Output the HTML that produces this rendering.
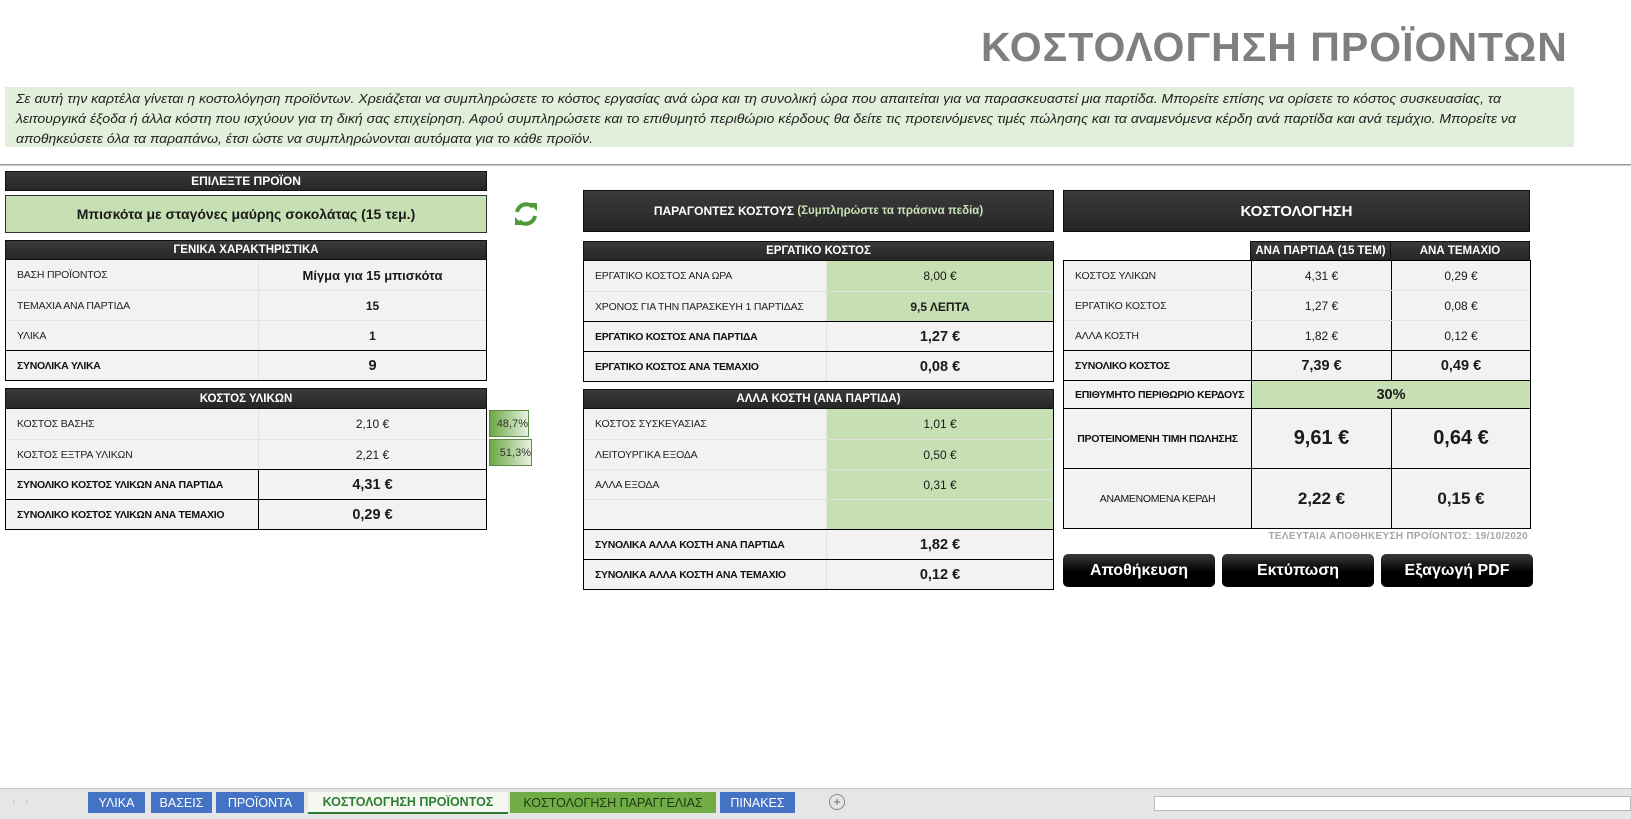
<!DOCTYPE html>
<html><head><meta charset="utf-8">
<style>
*{box-sizing:border-box;margin:0;padding:0}
body{width:1631px;height:819px;background:#fff;position:relative;overflow:hidden;font-family:"Liberation Sans","DejaVu Sans",sans-serif;color:#1a1a1a}
.a{position:absolute}
.hd{position:absolute;background:linear-gradient(#3a3a3a,#262626);color:#fff;font-weight:bold;font-size:11.5px;display:flex;align-items:center;justify-content:center;border:1px solid #111}
.tb{position:absolute;border:1px solid #000;background:#f2f2f2;border-top:none}
.r{display:flex;height:30px;border-top:1px solid #e2e2e2}
.r.b{border-top:1px solid #000}
.r>div{display:flex;align-items:center}
.l{padding-left:11px;font-size:10.5px;letter-spacing:-0.2px;color:#222}
.b .l{font-weight:bold;font-size:10.5px;letter-spacing:-0.3px;color:#111}
.v{justify-content:center;font-size:12px;border-left:1px solid #e2e2e2}
.b .v{font-weight:bold;font-size:14.5px;border-left:1px solid #000}
.g{background:#c6e0b4}
.btn{position:absolute;top:554px;height:33px;width:152px;border-radius:5px;background:linear-gradient(#3a3a3a,#000 55%);color:#fff;font-weight:bold;font-size:16px;display:flex;align-items:center;justify-content:center}
.tab{position:absolute;top:792px;height:21px;font-size:12.5px;display:flex;align-items:center;justify-content:center;color:#fff;background:#4472c4}
</style></head><body>

<div class="a" style="left:981px;top:24px;width:590px;font-size:41px;font-weight:bold;color:#7f7f7f;letter-spacing:1px;white-space:nowrap">ΚΟΣΤΟΛΟΓΗΣΗ ΠΡΟΪΟΝΤΩΝ</div>

<div class="a" style="left:5px;top:87px;width:1569px;height:60px;background:#e2efda"></div>
<svg class="a" style="left:0;top:0" width="1631" height="170">
<g font-family="Liberation Sans, sans-serif" font-style="italic" font-size="13" fill="#222">
<text x="16" y="103" textLength="1485" lengthAdjust="spacingAndGlyphs">Σε αυτή την καρτέλα γίνεται η κοστολόγηση προϊόντων. Χρειάζεται να συμπληρώσετε το κόστος εργασίας ανά ώρα και τη συνολική ώρα που απαιτείται για να παρασκευαστεί μια παρτίδα. Μπορείτε επίσης να ορίσετε το κόστος συσκευασίας, τα</text>
<text x="16" y="123" textLength="1500" lengthAdjust="spacingAndGlyphs">λειτουργικά έξοδα ή άλλα κόστη που ισχύουν για τη δική σας επιχείρηση. Αφού συμπληρώσετε και το επιθυμητό περιθώριο κέρδους θα δείτε τις προτεινόμενες τιμές πώλησης και τα αναμενόμενα κέρδη ανά παρτίδα και ανά τεμάχιο. Μπορείτε να</text>
<text x="16" y="143" textLength="577" lengthAdjust="spacingAndGlyphs">αποθηκεύσετε όλα τα παραπάνω, έτσι ώστε να συμπληρώνονται αυτόματα για το κάθε προϊόν.</text>
</g>
<rect x="0" y="164" width="1631" height="1.5" fill="#9a9a9a"/>
</svg>

<!-- LEFT -->
<div class="hd" style="left:5px;top:171px;width:482px;height:20px;font-size:12px">ΕΠΙΛΕΞΤΕ ΠΡΟΪΟΝ</div>
<div class="a" style="left:5px;top:195px;width:482px;height:38px;background:#c6e0b4;border:1px solid #333;display:flex;align-items:center;justify-content:center;font-weight:bold;font-size:14px">Μπισκότα με σταγόνες μαύρης σοκολάτας (15 τεμ.)</div>
<svg class="a" style="left:512px;top:200px" width="28" height="28" viewBox="0 0 28 28">
<g fill="none" stroke="#4e9a3a" stroke-width="4">
<path d="M5 12 A9.5 9.5 0 0 1 21 7"/>
<path d="M23 16 A9.5 9.5 0 0 1 7 21"/>
</g>
<path d="M17 3 L25 3 L25 11 Z" fill="#4e9a3a"/>
<path d="M11 25 L3 25 L3 17 Z" fill="#4e9a3a"/>
</svg>

<div class="hd" style="left:5px;top:240px;width:482px;height:20px">ΓΕΝΙΚΑ ΧΑΡΑΚΤΗΡΙΣΤΙΚΑ</div>
<div class="tb" style="left:5px;top:260px;width:482px">
<div class="r" style="border-top:none"><div class="l" style="width:252px">ΒΑΣΗ ΠΡΟΪΟΝΤΟΣ</div><div class="v" style="flex:1;font-weight:bold;font-size:13px">Μίγμα για 15 μπισκότα</div></div>
<div class="r"><div class="l" style="width:252px">ΤΕΜΑΧΙΑ ΑΝΑ ΠΑΡΤΙΔΑ</div><div class="v" style="flex:1;font-weight:bold">15</div></div>
<div class="r"><div class="l" style="width:252px">ΥΛΙΚΑ</div><div class="v" style="flex:1;font-weight:bold">1</div></div>
<div class="r b"><div class="l" style="width:252px">ΣΥΝΟΛΙΚΑ ΥΛΙΚΑ</div><div class="v" style="flex:1;border-left-color:#e2e2e2">9</div></div>
</div>

<div class="hd" style="left:5px;top:388px;width:482px;height:21px">ΚΟΣΤΟΣ ΥΛΙΚΩΝ</div>
<div class="tb" style="left:5px;top:409px;width:482px">
<div class="r" style="border-top:none"><div class="l" style="width:252px">ΚΟΣΤΟΣ ΒΑΣΗΣ</div><div class="v" style="flex:1">2,10 €</div></div>
<div class="r"><div class="l" style="width:252px">ΚΟΣΤΟΣ ΕΞΤΡΑ ΥΛΙΚΩΝ</div><div class="v" style="flex:1">2,21 €</div></div>
<div class="r b"><div class="l" style="width:252px">ΣΥΝΟΛΙΚΟ ΚΟΣΤΟΣ ΥΛΙΚΩΝ ΑΝΑ ΠΑΡΤΙΔΑ</div><div class="v" style="flex:1">4,31 €</div></div>
<div class="r b"><div class="l" style="width:252px">ΣΥΝΟΛΙΚΟ ΚΟΣΤΟΣ ΥΛΙΚΩΝ ΑΝΑ ΤΕΜΑΧΙΟ</div><div class="v" style="flex:1">0,29 €</div></div>
</div>
<div class="a" style="left:489px;top:410px;width:40px;height:27px;background:linear-gradient(90deg,#6aa843,#e8f2e0);border:1px solid #5f8a44;font-size:11px;color:#333;display:flex;align-items:center;justify-content:flex-end;padding-right:0">48,7%</div>
<div class="a" style="left:489px;top:439px;width:43px;height:27px;background:linear-gradient(90deg,#6aa843,#e8f2e0);border:1px solid #5f8a44;font-size:11px;color:#333;display:flex;align-items:center;justify-content:flex-end">51,3%</div>

<!-- MIDDLE -->
<div class="hd" style="left:583px;top:190px;width:471px;height:42px;font-size:12px">ΠΑΡΑΓΟΝΤΕΣ ΚΟΣΤΟΥΣ&nbsp;<span style="color:#c6e0b4;font-size:11.5px">(Συμπληρώστε τα πράσινα πεδία)</span></div>
<div class="hd" style="left:583px;top:241px;width:471px;height:20px">ΕΡΓΑΤΙΚΟ ΚΟΣΤΟΣ</div>
<div class="tb" style="left:583px;top:261px;width:471px">
<div class="r" style="border-top:none"><div class="l" style="width:242px">ΕΡΓΑΤΙΚΟ ΚΟΣΤΟΣ ΑΝΑ ΩΡΑ</div><div class="v g" style="flex:1">8,00 €</div></div>
<div class="r"><div class="l" style="width:242px">ΧΡΟΝΟΣ ΓΙΑ ΤΗΝ ΠΑΡΑΣΚΕΥΗ 1 ΠΑΡΤΙΔΑΣ</div><div class="v g" style="flex:1;font-weight:bold">9,5 ΛΕΠΤΑ</div></div>
<div class="r b"><div class="l" style="width:242px">ΕΡΓΑΤΙΚΟ ΚΟΣΤΟΣ ΑΝΑ ΠΑΡΤΙΔΑ</div><div class="v" style="flex:1;border-left-color:#e2e2e2">1,27 €</div></div>
<div class="r b"><div class="l" style="width:242px">ΕΡΓΑΤΙΚΟ ΚΟΣΤΟΣ ΑΝΑ ΤΕΜΑΧΙΟ</div><div class="v" style="flex:1;border-left-color:#e2e2e2">0,08 €</div></div>
</div>

<div class="hd" style="left:583px;top:389px;width:471px;height:20px">ΑΛΛΑ ΚΟΣΤΗ (ΑΝΑ ΠΑΡΤΙΔΑ)</div>
<div class="tb" style="left:583px;top:409px;width:471px">
<div class="r" style="border-top:none"><div class="l" style="width:242px">ΚΟΣΤΟΣ ΣΥΣΚΕΥΑΣΙΑΣ</div><div class="v g" style="flex:1">1,01 €</div></div>
<div class="r"><div class="l" style="width:242px">ΛΕΙΤΟΥΡΓΙΚΑ ΕΞΟΔΑ</div><div class="v g" style="flex:1">0,50 €</div></div>
<div class="r"><div class="l" style="width:242px">ΑΛΛΑ ΕΞΟΔΑ</div><div class="v g" style="flex:1">0,31 €</div></div>
<div class="r"><div class="l" style="width:242px"></div><div class="v g" style="flex:1"></div></div>
<div class="r b"><div class="l" style="width:242px">ΣΥΝΟΛΙΚΑ ΑΛΛΑ ΚΟΣΤΗ ΑΝΑ ΠΑΡΤΙΔΑ</div><div class="v" style="flex:1;border-left-color:#e2e2e2">1,82 €</div></div>
<div class="r b"><div class="l" style="width:242px">ΣΥΝΟΛΙΚΑ ΑΛΛΑ ΚΟΣΤΗ ΑΝΑ ΤΕΜΑΧΙΟ</div><div class="v" style="flex:1;border-left-color:#e2e2e2">0,12 €</div></div>
</div>

<!-- RIGHT -->
<div class="hd" style="left:1063px;top:190px;width:467px;height:42px;font-size:15px">ΚΟΣΤΟΛΟΓΗΣΗ</div>
<div class="hd" style="left:1250px;top:241px;width:141px;height:20px">ΑΝΑ ΠΑΡΤΙΔΑ (15 ΤΕΜ)</div>
<div class="hd" style="left:1390px;top:241px;width:140px;height:20px">ΑΝΑ ΤΕΜΑΧΙΟ</div>
<div class="tb" style="left:1063px;top:260px;width:468px;border-top:1px solid #000">
<div class="r" style="border-top:none;height:29px"><div class="l" style="width:187px">ΚΟΣΤΟΣ ΥΛΙΚΩΝ</div><div class="v" style="width:140px;border-left-color:#000">4,31 €</div><div class="v" style="flex:1;border-left-color:#000">0,29 €</div></div>
<div class="r"><div class="l" style="width:187px">ΕΡΓΑΤΙΚΟ ΚΟΣΤΟΣ</div><div class="v" style="width:140px;border-left-color:#000">1,27 €</div><div class="v" style="flex:1;border-left-color:#000">0,08 €</div></div>
<div class="r"><div class="l" style="width:187px">ΑΛΛΑ ΚΟΣΤΗ</div><div class="v" style="width:140px;border-left-color:#000">1,82 €</div><div class="v" style="flex:1;border-left-color:#000">0,12 €</div></div>
<div class="r b"><div class="l" style="width:187px">ΣΥΝΟΛΙΚΟ ΚΟΣΤΟΣ</div><div class="v" style="width:140px">7,39 €</div><div class="v" style="flex:1">0,49 €</div></div>
<div class="r b" style="height:28px"><div class="l" style="width:187px">ΕΠΙΘΥΜΗΤΟ ΠΕΡΙΘΩΡΙΟ ΚΕΡΔΟΥΣ</div><div class="v g" style="flex:1">30%</div></div>
<div class="r b" style="height:60px"><div class="l" style="width:187px;justify-content:center;padding-left:0">ΠΡΟΤΕΙΝΟΜΕΝΗ ΤΙΜΗ ΠΩΛΗΣΗΣ</div><div class="v" style="width:140px;font-size:20px">9,61 €</div><div class="v" style="flex:1;font-size:20px">0,64 €</div></div>
<div class="r b" style="height:60px"><div class="l" style="width:187px;justify-content:center;padding-left:0;font-weight:normal">ΑΝΑΜΕΝΟΜΕΝΑ ΚΕΡΔΗ</div><div class="v" style="width:140px;font-size:17px">2,22 €</div><div class="v" style="flex:1;font-size:17px">0,15 €</div></div>
</div>
<div class="a" style="left:1180px;top:531px;width:348px;text-align:right;font-size:10px;font-weight:bold;color:#a6a6a6;letter-spacing:0.3px">ΤΕΛΕΥΤΑΙΑ ΑΠΟΘΗΚΕΥΣΗ ΠΡΟΪΟΝΤΟΣ: 19/10/2020</div>
<div class="btn" style="left:1063px">Αποθήκευση</div>
<div class="btn" style="left:1222px">Εκτύπωση</div>
<div class="btn" style="left:1381px">Εξαγωγή PDF</div>

<!-- BOTTOM BAR -->
<div class="a" style="left:0;top:788px;width:1631px;height:31px;background:#e6e6e6;border-top:1px solid #c8c8c8"></div>
<div class="a" style="left:12px;top:796px;font-size:11px;color:#bbb">‹&nbsp;&nbsp;&nbsp;›</div>
<div class="tab" style="left:88px;width:57px">ΥΛΙΚΑ</div>
<div class="tab" style="left:151px;width:61px">ΒΑΣΕΙΣ</div>
<div class="tab" style="left:216px;width:88px">ΠΡΟΪΟΝΤΑ</div>
<div class="tab" style="left:308px;width:200px;background:#f4f8f0;color:#2e7d32;font-weight:bold;border-bottom:2px solid #2e7d32;height:22px">ΚΟΣΤΟΛΟΓΗΣΗ ΠΡΟΪΟΝΤΟΣ</div>
<div class="tab" style="left:510px;width:206px;background:#70ad47;color:#1e3a10">ΚΟΣΤΟΛΟΓΗΣΗ ΠΑΡΑΓΓΕΛΙΑΣ</div>
<div class="tab" style="left:720px;width:75px">ΠΙΝΑΚΕΣ</div>
<div class="a" style="left:829px;top:794px;width:16px;height:16px;border:1px solid #888;border-radius:50%;font-size:13px;line-height:14px;text-align:center;color:#666">+</div>
<div class="a" style="left:1154px;top:796px;width:477px;height:15px;background:#fff;border:1px solid #bbb"></div>
</body></html>
